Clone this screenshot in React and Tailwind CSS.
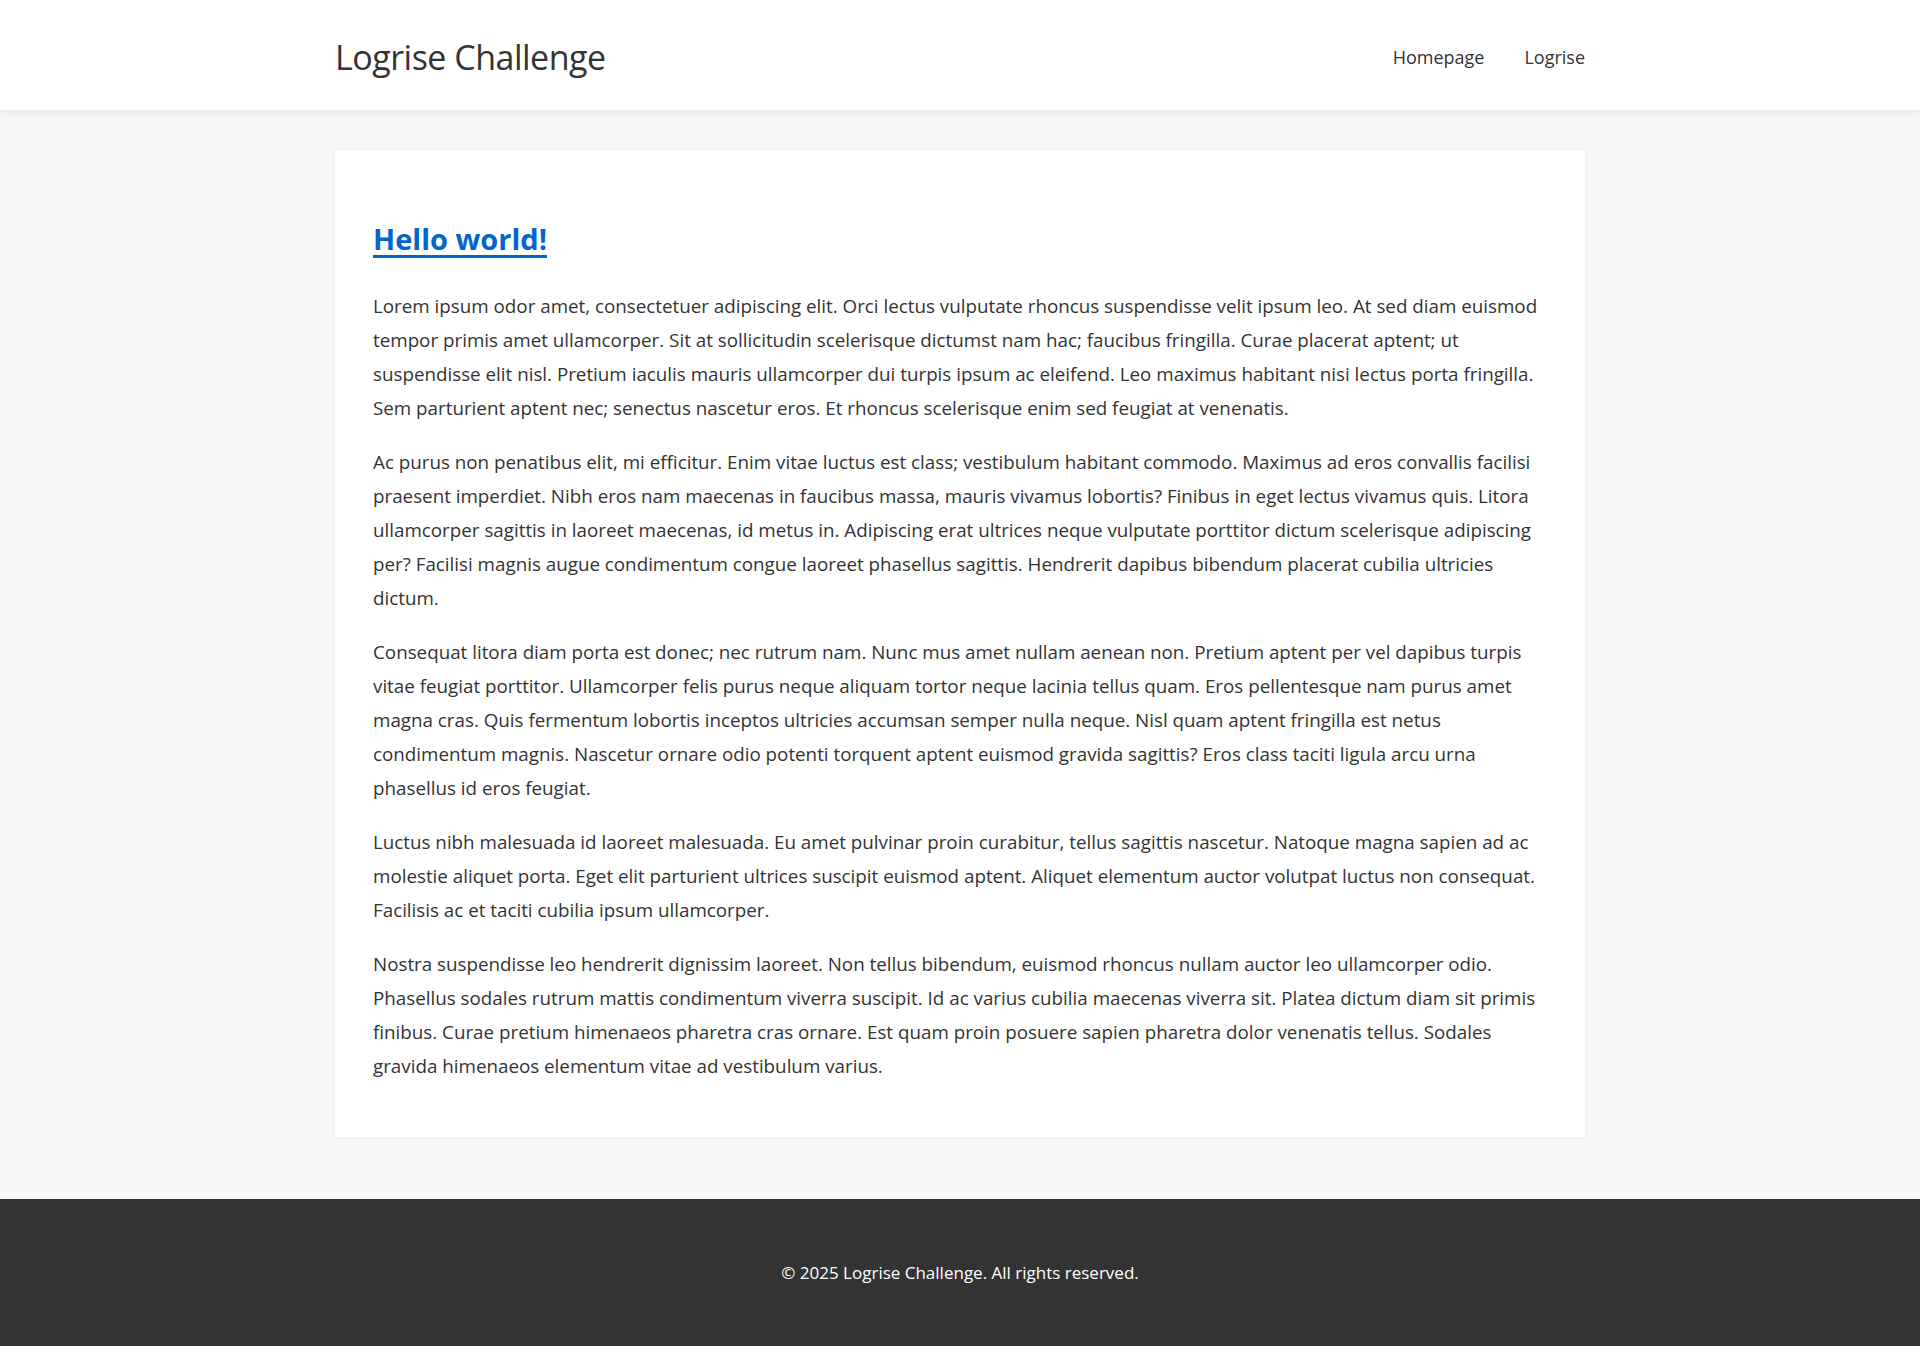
import React from "react";

const paragraphs = [
  "Lorem ipsum odor amet, consectetuer adipiscing elit. Orci lectus vulputate rhoncus suspendisse velit ipsum leo. At sed diam euismod tempor primis amet ullamcorper. Sit at sollicitudin scelerisque dictumst nam hac; faucibus fringilla. Curae placerat aptent; ut suspendisse elit nisl. Pretium iaculis mauris ullamcorper dui turpis ipsum ac eleifend. Leo maximus habitant nisi lectus porta fringilla. Sem parturient aptent nec; senectus nascetur eros. Et rhoncus scelerisque enim sed feugiat at venenatis.",
  "Ac purus non penatibus elit, mi efficitur. Enim vitae luctus est class; vestibulum habitant commodo. Maximus ad eros convallis facilisi praesent imperdiet. Nibh eros nam maecenas in faucibus massa, mauris vivamus lobortis? Finibus in eget lectus vivamus quis. Litora ullamcorper sagittis in laoreet maecenas, id metus in. Adipiscing erat ultrices neque vulputate porttitor dictum scelerisque adipiscing per? Facilisi magnis augue condimentum congue laoreet phasellus sagittis. Hendrerit dapibus bibendum placerat cubilia ultricies dictum.",
  "Consequat litora diam porta est donec; nec rutrum nam. Nunc mus amet nullam aenean non. Pretium aptent per vel dapibus turpis vitae feugiat porttitor. Ullamcorper felis purus neque aliquam tortor neque lacinia tellus quam. Eros pellentesque nam purus amet magna cras. Quis fermentum lobortis inceptos ultricies accumsan semper nulla neque. Nisl quam aptent fringilla est netus condimentum magnis. Nascetur ornare odio potenti torquent aptent euismod gravida sagittis? Eros class taciti ligula arcu urna phasellus id eros feugiat.",
  "Luctus nibh malesuada id laoreet malesuada. Eu amet pulvinar proin curabitur, tellus sagittis nascetur. Natoque magna sapien ad ac molestie aliquet porta. Eget elit parturient ultrices suscipit euismod aptent. Aliquet elementum auctor volutpat luctus non consequat. Facilisis ac et taciti cubilia ipsum ullamcorper.",
  "Nostra suspendisse leo hendrerit dignissim laoreet. Non tellus bibendum, euismod rhoncus nullam auctor leo ullamcorper odio. Phasellus sodales rutrum mattis condimentum viverra suscipit. Id ac varius cubilia maecenas viverra sit. Platea dictum diam sit primis finibus. Curae pretium himenaeos pharetra cras ornare. Est quam proin posuere sapien pharetra dolor venenatis tellus. Sodales gravida himenaeos elementum vitae ad vestibulum varius.",
];

export default function App() {
  return (
    <div className="min-h-screen flex flex-col bg-[#f9f9f9] text-[#333333] font-['Open_Sans',sans-serif]">
      <header className="relative z-10 bg-white shadow-[0_2px_10px_rgba(0,0,0,0.1)]">
        <div className="mx-auto w-[1250px] h-[110px] pt-[5px] flex items-center justify-between">
          <h1 className="text-[34px] leading-[1.2] tracking-[-0.5px] font-normal text-[#333333]">Logrise Challenge</h1>
          <nav className="flex items-center gap-[40px] text-[18px] leading-[27px] text-[#333333]">
            <a href="#">Homepage</a>
            <a href="#">Logrise</a>
          </nav>
        </div>
      </header>

      <main className="flex-1 pt-[40px] pb-[59px]">
        <article className="mx-auto w-[1250px] bg-white shadow-[0_0_10px_rgba(0,0,0,0.06)] px-[38px] pt-[38px] pb-[34px]">
          <h2 className="mt-[33px] mb-[32px] text-[29px] leading-[36px] font-bold">
            <a href="#" className="text-[#0066cc] underline decoration-[3px] underline-offset-[5px]">Hello world!</a>
          </h2>
          {paragraphs.map((p, i) => (
            <p key={i} className="mb-5 text-[18.8px] leading-[34px] text-[#333333]">{p}</p>
          ))}
        </article>
      </main>

      <footer className="bg-[#333333] py-[60px] text-center">
        <p className="text-[17px] leading-[27px] text-white">© 2025 Logrise Challenge. All rights reserved.</p>
      </footer>
    </div>
  );
}
